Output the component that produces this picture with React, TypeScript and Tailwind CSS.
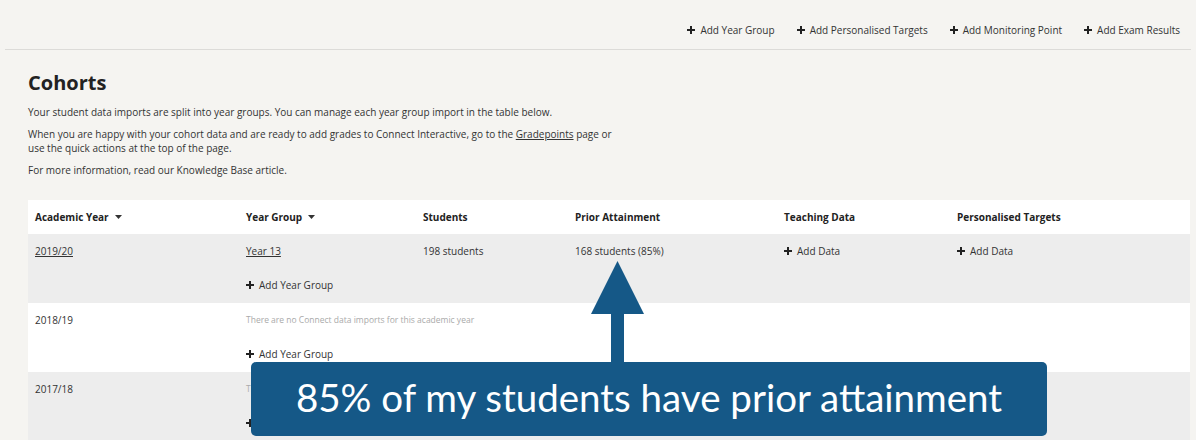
import { Plus } from 'lucide-react';

const actions = ['Add Year Group', 'Add Personalised Targets', 'Add Monitoring Point', 'Add Exam Results'];

const cols = 'grid grid-cols-[211px_177px_152px_209px_173px_1fr]';

function PlusIcon() {
  return (
    <svg width="8" height="8" viewBox="0 0 8 8" className="mr-[5px] inline-block shrink-0">
      <path d="M3 0h2v3h3v2H5v3H3V5H0V3h3z" fill="#222" />
    </svg>
  );
}

function Caret() {
  return (
    <svg width="7" height="4" viewBox="0 0 7 4" className="ml-[6px] inline-block">
      <path d="M0 0h7L3.5 4z" fill="#333" />
    </svg>
  );
}

function AddLink({ label }: { label: string }) {
  return (
    <span className="flex items-center text-[10px] text-[#333]">
      <PlusIcon />
      {label}
    </span>
  );
}

interface Row {
  year: string;
  link?: boolean;
  group?: string;
  students?: string;
  prior?: string;
  gray: boolean;
}

const rows: Row[] = [
  { year: '2019/20', link: true, group: 'Year 13', students: '198 students', prior: '168 students (85%)', gray: true },
  { year: '2018/19', gray: false },
  { year: '2017/18', gray: true },
];

export default function App() {
  return (
    <div className="relative h-[440px] w-[1196px] overflow-hidden bg-[#f5f4f1] font-['Open_Sans',sans-serif] text-[#333]">
      <div className="mx-[5px] flex h-[50px] items-center justify-end gap-[22px] border-b border-[#dcdbd8] pr-[11px] pt-[11px]">
        {actions.map((a) => (
          <AddLink key={a} label={a} />
        ))}
      </div>

      <div className="px-[28px]">
        <h1 className="mt-[20px] text-[20px] font-bold leading-[26px] text-[#222]">Cohorts</h1>
        <div className="mt-[9px] w-[600px] text-[10px] leading-[14px]">
          <p>Your student data imports are split into year groups. You can manage each year group import in the table below.</p>
          <p className="mt-[8px]">
            When you are happy with your cohort data and are ready to add grades to Connect Interactive, go to the{' '}
            <span className="underline">Gradepoints</span> page or use the quick actions at the top of the page.
          </p>
          <p className="mt-[8px]">For more information, read our Knowledge Base article.</p>
        </div>

        <div className="mt-[23px] w-[1162px]">
          <div className={`${cols} h-[34px] items-center bg-white text-[10px] font-bold text-[#222]`}>
            <div className="flex items-center pl-[7px]">Academic Year<Caret /></div>
            <div className="flex items-center pl-[7px]">Year Group<Caret /></div>
            <div className="pl-[7px]">Students</div>
            <div className="pl-[7px]">Prior Attainment</div>
            <div className="pl-[7px]">Teaching Data</div>
            <div className="pl-[7px]">Personalised Targets</div>
          </div>
          {rows.map((r) => (
            <div key={r.year} className={`${cols} h-[69px] text-[10px] ${r.gray ? 'bg-[#ededed]' : 'bg-white'}`}>
              <div className="pl-[7px] pt-[10px] leading-[14px]">
                <span className={r.link ? 'underline' : ''}>{r.year}</span>
              </div>
              {r.group ? (
                <>
                  <div className="flex flex-col pl-[7px] pt-[10px] leading-[14px]">
                    <span className="underline">{r.group}</span>
                    <span className="mt-[20px]"><AddLink label="Add Year Group" /></span>
                  </div>
                  <div className="pl-[7px] pt-[10px] leading-[14px]">{r.students}</div>
                  <div className="pl-[7px] pt-[10px] leading-[14px]">{r.prior}</div>
                  <div className="pl-[7px] pt-[10px] leading-[14px]"><AddLink label="Add Data" /></div>
                  <div className="pl-[7px] pt-[10px] leading-[14px]"><AddLink label="Add Data" /></div>
                </>
              ) : (
                <div className="col-span-5 flex flex-col pl-[7px] pt-[10px] leading-[14px]">
                  <span className="text-[8.5px] text-[#aaa]">There are no Connect data imports for this academic year</span>
                  <span className="mt-[20px]"><AddLink label="Add Year Group" /></span>
                </div>
              )}
            </div>
          ))}
        </div>
      </div>

      {/* callout overlay */}
      <svg className="absolute left-[591px] top-[261px]" width="53" height="102" viewBox="0 0 53 102">
        <path d="M26.5 0L53 53H33V102H20V53H0z" fill="#155887" />
      </svg>
      <div className="absolute left-[251px] top-[362px] flex h-[74px] w-[796px] items-center justify-center rounded-[5px] bg-[#155887] pb-[2px] font-['Lato',sans-serif] text-[38.5px] text-white">
        85% of my students have prior attainment
      </div>
    </div>
  );
}
